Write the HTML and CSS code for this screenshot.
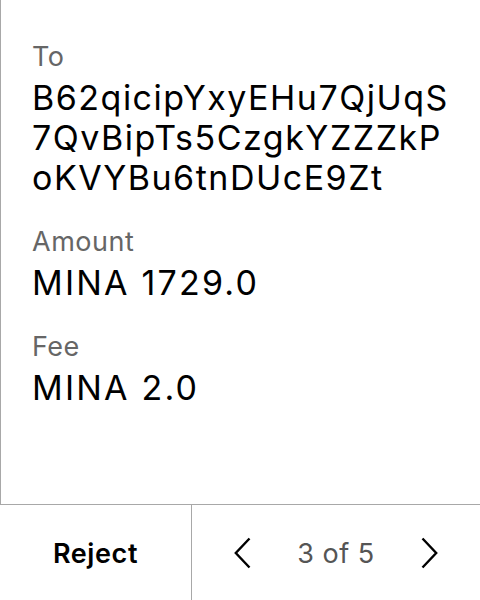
FILE: index.html
```html
<!DOCTYPE html>
<html>
<head>
<meta charset="utf-8">
<link rel="stylesheet" href="styles.css">
</head>
<body>
<div class="screen">
  <div class="content">
    <div class="field">
      <div class="label">To</div>
      <div class="value address">B62qicipYxyEHu7QjUqS<br>7QvBipTs5CzgkYZZZkP<br>oKVYBu6tnDUcE9Zt</div>
    </div>
    <div class="field">
      <div class="label">Amount</div>
      <div class="value amount">MINA 1729.0</div>
    </div>
    <div class="field">
      <div class="label">Fee</div>
      <div class="value amount">MINA 2.0</div>
    </div>
  </div>
  <div class="footer">
    <div class="reject">Reject</div>
    <div class="pager">
      <svg class="chev" width="17" height="32" viewBox="0 0 17 32"><path d="M15.5 1.5 L1.8 16 L15.5 30.5" fill="none" stroke="#000" stroke-width="2.4"/></svg>
      <span class="count">3 of 5</span>
      <svg class="chev" width="17" height="32" viewBox="0 0 17 32"><path d="M1.5 1.5 L15.2 16 L1.5 30.5" fill="none" stroke="#000" stroke-width="2.4"/></svg>
    </div>
  </div>
</div>
</body>
</html>
```

FILE: styles.css
```css
html, body {
  margin: 0;
  padding: 0;
  background: #fff;
}
body {
  font-family: Inter, "Noto Sans", sans-serif;
  color: #000;
}
.screen {
  width: 480px;
  height: 600px;
  display: flex;
  flex-direction: column;
}
.content {
  flex: 0 0 505px;
  box-sizing: border-box;
  border-left: 1px solid #a8a8a8;
  border-bottom: 1px solid #a8a8a8;
  padding: 40px 0 0 31px;
}
.field {
  margin-bottom: 27px;
}
.label {
  font-size: 27px;
  line-height: 34px;
  letter-spacing: 0.5px;
  color: #666;
}
.value {
  font-size: 34px;
  line-height: 40px;
  letter-spacing: 1.5px;
  margin-top: 4px;
}
.amount {
  letter-spacing: 2.2px;
}
.footer {
  flex: 1;
  display: grid;
  grid-template-columns: 192px 1fr;
}
.reject {
  border-right: 1px solid #a8a8a8;
  display: flex;
  align-items: center;
  justify-content: center;
  font-size: 27px;
  font-weight: 600;
  letter-spacing: 0.6px;
  padding-top: 2px;
}
.pager {
  display: flex;
  align-items: center;
  justify-content: center;
  gap: 46px;
}
.count {
  font-size: 27px;
  letter-spacing: 0.5px;
  color: #555;
  padding-top: 2px;
}
```
